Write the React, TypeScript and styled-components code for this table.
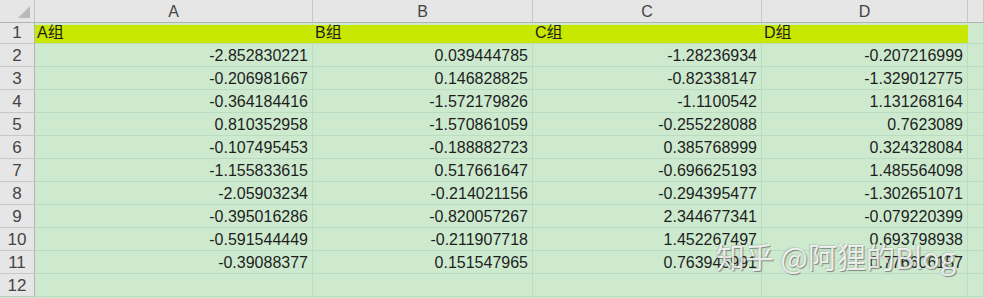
import React from 'react';
import styled, {createGlobalStyle} from 'styled-components';

const GlobalStyle = createGlobalStyle`
  html, body {
    margin: 0;
    padding: 0;
    background: #cdeacf;
    overflow: hidden;
  }
`;

const Sheet = styled.div`
  position: relative;
  width: 984px;
  height: 298px;
  overflow: hidden;
  display: grid;
  grid-template-columns: 35px 278px 220px 229px 206px 1fr;
  grid-template-rows: 23px 21px repeat(11, 23px) 1fr;
  background: #cdeacf;
  font-family: "Liberation Sans", "Noto Sans CJK SC", sans-serif;
  font-size: 16px;
  color: #1e1e1e;
`;

const Corner = styled.div`
  background: #e6e6e6;
  border-right: 1px solid #c4c4c4;
  border-bottom: 1px solid #b4b4b4;
  display: flex;
  align-items: flex-end;
  justify-content: flex-end;
  padding: 0 4px 4px 0;
`;

const ColHead = styled.div`
  background: #e6e6e6;
  border-right: 1px solid #c8c8c8;
  border-bottom: 1px solid #b4b4b4;
  display: flex;
  align-items: center;
  justify-content: center;
  color: #444;
  font-size: 16px;
  padding-top: 1px;
`;

const RowHead = styled.div`
  background: #e6e6e6;
  border-right: 1px solid #b4b4b4;
  border-bottom: 1px solid #c8c8c8;
  display: flex;
  align-items: flex-end;
  justify-content: center;
  color: #444;
  font-size: 17px;
  line-height: 21px;
`;

const Cell = styled.div<{$head?: boolean; $num?: boolean}>`
  background: ${p => (p.$head ? '#c9e800' : '#cdeacf')};
  border-right: 1px solid ${p => (p.$head ? '#c9e800' : '#bcdcc1')};
  border-bottom: 1px solid #bcdcc1;
  border-top: ${p => (p.$head ? '2px solid #cdeacf' : '0')};
  display: flex;
  align-items: flex-end;
  justify-content: ${p => (p.$num ? 'flex-end' : 'flex-start')};
  padding: ${p => (p.$num ? '0 4px 0 0' : '0 0 0 2px')};
  line-height: 20px;
  white-space: nowrap;
  overflow: visible;
`;

const Watermark = styled.div`
  position: absolute;
  left: 716px;
  top: 236px;
  font-family: "Noto Sans CJK SC", "Liberation Sans", sans-serif;
  font-size: 29px;
  line-height: 40px;
  color: rgba(255, 255, 255, 0.82);
  text-shadow: 1px 1px 1px rgba(60, 60, 60, 0.55), -1px -1px 1px rgba(120, 120, 120, 0.25);
  white-space: nowrap;
  pointer-events: none;
`;

const columns = ['A', 'B', 'C', 'D'];

const data: string[][] = [
    ['-2.852830221', '0.039444785', '-1.28236934', '-0.207216999'],
    ['-0.206981667', '0.146828825', '-0.82338147', '-1.329012775'],
    ['-0.364184416', '-1.572179826', '-1.1100542', '1.131268164'],
    ['0.810352958', '-1.570861059', '-0.255228088', '0.7623089'],
    ['-0.107495453', '-0.188882723', '0.385768999', '0.324328084'],
    ['-1.155833615', '0.517661647', '-0.696625193', '1.485564098'],
    ['-2.05903234', '-0.214021156', '-0.294395477', '-1.302651071'],
    ['-0.395016286', '-0.820057267', '2.344677341', '-0.079220399'],
    ['-0.591544449', '-0.211907718', '1.452267497', '0.693798938'],
    ['-0.39088377', '0.151547965', '0.763945991', '0.776606157'],
];

const CornerMark = () => (
    <svg width="12" height="12" viewBox="0 0 12 12">
        <polygon points="12,0 12,12 0,12" fill="#b9b9b9"/>
    </svg>
);

export default function App() {
    return (
        <>
            <GlobalStyle/>
            <Sheet>
                <Corner><CornerMark/></Corner>
                {columns.map(c => <ColHead key={c}>{c}</ColHead>)}
                <ColHead/>

                <RowHead>1</RowHead>
                {columns.map(c => <Cell key={c} $head>{c}组</Cell>)}
                <Cell/>

                {data.map((row, i) => (
                    <React.Fragment key={i}>
                        <RowHead>{i + 2}</RowHead>
                        {row.map((v, j) => <Cell key={j} $num>{v}</Cell>)}
                        <Cell/>
                    </React.Fragment>
                ))}

                <RowHead>12</RowHead>
                {columns.map(c => <Cell key={c}/>)}
                <Cell/>

                <Watermark>知乎 @阿狸的Blog</Watermark>
            </Sheet>
        </>
    );
}
